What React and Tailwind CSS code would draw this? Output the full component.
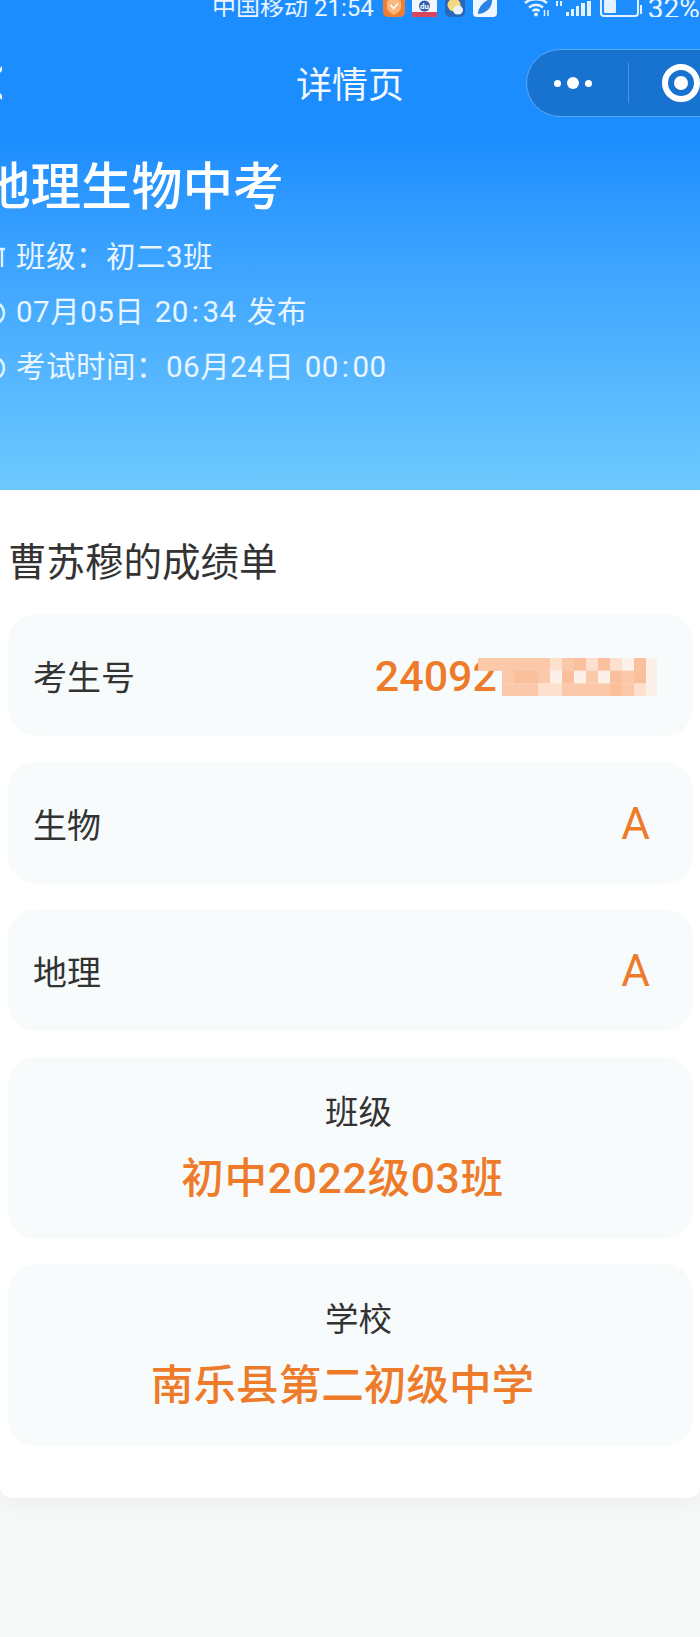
const FONT = 'font-["Roboto","Noto_Sans_CJK_SC",sans-serif]';

// mosaic over the blurred part of the candidate number
const MOSAIC = [
  'pppppplpdldlwdw',
  '..pddpwdwpwdpdw',
  '..pppllppppdplw',
];
const MOSAIC_COLORS = { p: '#fbc8a9', d: '#fabf9b', l: '#fde0ce', w: '#fdf0e8' };

function Mosaic() {
  return (
    <svg width="179" height="38" viewBox="0 0 179 38" className="block shrink-0">
      {MOSAIC.map((row, r) =>
        row.split('').map((c, i) =>
          c === '.' ? null : (
            <rect key={`${r}-${i}`} x={i * 12} y={r * 12.67} width="12.2" height="12.9" fill={MOSAIC_COLORS[c]} />
          ),
        ),
      )}
    </svg>
  );
}

function StatusIcons() {
  return (
    <div className="flex items-end h-[17px]">
      <svg width="22" height="17" viewBox="0 0 22 17" className="ml-[9px] block">
        <rect x="0" y="-6" width="22" height="23" rx="5" fill="#ee7f32" />
        <path d="M11 -2 L18 1 V7 C18 11 14 13 11 15 C8 13 4 11 4 7 V1 Z" fill="#f9b77f" />
        <path d="M7.5 5 L10.5 8.5 L15 3.5" fill="none" stroke="#fff" strokeWidth="1.8" />
      </svg>
      <svg width="25" height="17" viewBox="0 0 25 17" className="ml-[7px] block">
        <rect x="0" y="-6" width="25" height="23" rx="3" fill="#f4f6fb" />
        <rect x="0" y="12" width="25" height="5" fill="#d9455f" />
        <circle cx="12.5" cy="6" r="5.5" fill="#2f5fb3" />
        <text x="12.5" y="9" fontSize="8" fontWeight="700" textAnchor="middle" fill="#fff">du</text>
      </svg>
      <svg width="20" height="17" viewBox="0 0 20 17" className="ml-[8px] block">
        <rect x="0" y="-6" width="20" height="23" rx="5" fill="#2b67b8" />
        <circle cx="9" cy="5" r="6.5" fill="#f5d77c" />
        <ellipse cx="13" cy="10" rx="5" ry="4.5" fill="#eef3f8" />
      </svg>
      <svg width="24" height="17" viewBox="0 0 24 17" className="ml-[8px] block">
        <rect x="0" y="-6" width="24" height="23" rx="4" fill="#eef6fe" />
        <path d="M5 14 C5 7 11 1 19 -2 C20 6 15 13 5 14 Z" fill="#2a84e6" />
      </svg>
      <svg width="27" height="17" viewBox="0 0 27 17" className="ml-[27px] block" fill="none" stroke="#e4f1ff" strokeWidth="2.6">
        <path d="M1 3 C7 -2 17 -2 23 3" />
        <path d="M5 7.5 C9 4 15 4 19 7.5" />
        <path d="M8.5 11 C10.5 9.5 13.5 9.5 15.5 11" />
        <circle cx="12" cy="14.5" r="2" fill="#e4f1ff" stroke="none" />
        <path d="M20.5 10 V16 M24 10 V16" strokeWidth="1.5" />
      </svg>
      <div className="ml-[5px] mb-[11px] flex gap-[2px]">
        <span className="w-[2px] h-[5px] bg-[#e4f1ff]" />
        <span className="w-[2px] h-[5px] bg-[#e4f1ff]" />
      </div>
      <div className="ml-[4px] mb-[1px] flex items-end gap-[2px] h-[15px]">
        <span className="w-[3px] h-[4px] bg-[#e4f1ff]" />
        <span className="w-[3px] h-[7px] bg-[#e4f1ff]" />
        <span className="w-[3px] h-[10px] bg-[#e4f1ff]" />
        <span className="w-[4px] h-[13px] bg-[#e4f1ff]" />
        <span className="w-[4px] h-[15px] bg-[#e4f1ff]" />
      </div>
      <div className="ml-[9px] flex items-center h-[16px]">
        <div className="w-[39px] h-[21px] -mt-[5px] border-2 border-[#e4f1ff] rounded-[4px] p-[2px]">
          <div className="w-[12px] h-full bg-[#e4f1ff] rounded-[1px]" />
        </div>
        <span className="w-[2px] h-[9px] ml-[1px] bg-[#e4f1ff]" />
      </div>
    </div>
  );
}

function ClockStub() {
  return (
    <svg width="26" height="26" viewBox="0 0 26 26" className="shrink-0 block" fill="none" stroke="#e3f3ff" strokeWidth="2.4">
      <circle cx="13" cy="13" r="11" />
      <circle cx="13" cy="13" r="3.5" fill="#e3f3ff" stroke="none" />
    </svg>
  );
}

function ClassStub() {
  return (
    <svg width="26" height="26" viewBox="0 0 26 26" className="shrink-0 block" fill="none" stroke="#e3f3ff" strokeWidth="2.4">
      <path d="M2 4 H25 M22 4 V22" />
      <path d="M10 12 H17 V17 H10 Z" />
    </svg>
  );
}

function InfoLine({ icon, children }) {
  return (
    <div className="flex items-center h-[55px] -ml-[20px] text-[29.5px] text-[#e9f5ff] tracking-[0.5px] [word-spacing:2.5px]">
      {icon}
      <span className="ml-[10px] whitespace-pre">{children}</span>
    </div>
  );
}

function Colon() {
  return <span className="mx-[3px]">:</span>;
}

function Row({ label, children }) {
  return (
    <div className="flex items-center justify-between h-[122px] pl-[25px] pr-[43px] rounded-[28px] bg-[#f8fbfc]">
      <span className="pt-[7px] text-[34px] text-[#333]">{label}</span>
      {children}
    </div>
  );
}

function StackCard({ label, value, spacing }) {
  return (
    <div className="flex flex-col items-center h-[182px] pt-[32px] rounded-[28px] bg-[#f8fbfc]">
      <div className="ml-[16px] text-[33.5px] leading-[48px] text-[#333]">{label}</div>
      <div className={`-ml-[16px] mt-[17px] text-[42.6px] leading-[48px] font-medium text-[#ee7b2a] ${spacing}`}>{value}</div>
    </div>
  );
}

export default function App() {
  return (
    <div className={`w-[700px] h-[1637px] overflow-hidden bg-[#f7f9f8] ${FONT}`}>
      <div className="bg-[#1b8dff] h-[136px]">
        <div className="flex items-end h-[17px] overflow-hidden pl-[212px] text-white">
          <span className="text-[24px] leading-[17px] whitespace-nowrap text-[#eaf4ff]">中国移动 21:54</span>
          <StatusIcons />
          <span className="ml-[6px] text-[28px] leading-[17px] text-[#eaf4ff] whitespace-nowrap">32%</span>
        </div>
        <div className="flex items-center h-[68px] mt-[32px]">
          <svg width="2" height="36" viewBox="0 0 2 36" className="block shrink-0" fill="none" stroke="#fff" strokeWidth="3">
            <path d="M3 2 L-10 18 L3 34" />
          </svg>
          <span className="ml-[294px] pt-[6px] text-[36px] text-[#f3f9ff] whitespace-nowrap">详情页</span>
          <div className="ml-[122px] w-[200px] h-[68px] shrink-0 flex items-center rounded-l-[34px] border border-[#5aa9f6] bg-[#1873d0]">
            <div className="flex items-center gap-[6px] ml-[27px]">
              <span className="w-[7px] h-[7px] rounded-full bg-white" />
              <span className="w-[12px] h-[12px] rounded-full bg-white" />
              <span className="w-[7px] h-[7px] rounded-full bg-white" />
            </div>
            <span className="ml-[36px] w-px h-[40px] bg-[#4b94df]" />
            <div className="ml-[33px] w-[38px] h-[38px] rounded-full border-[6px] border-white flex items-center justify-center shrink-0">
              <span className="w-[14px] h-[14px] rounded-full bg-white" />
            </div>
          </div>
        </div>
      </div>

      <div className="h-[354px] bg-gradient-to-b from-[#1b8dff] to-[#6dc9fd]">
        <h1 className="-ml-[20px] pt-[22px] text-[50.6px] leading-[60px] font-medium text-white whitespace-nowrap">地理生物中考</h1>
        <div className="mt-[12px]">
          <InfoLine icon={<ClassStub />}>班级：初二3班</InfoLine>
          <InfoLine icon={<ClockStub />}>07月05日 20<Colon />34 发布</InfoLine>
          <InfoLine icon={<ClockStub />}>考试时间：06月24日 00<Colon />00</InfoLine>
        </div>
      </div>

      <div className="bg-white rounded-b-[12px] pt-[46px] pb-[52px] px-[8px] shadow-[0_8px_20px_rgba(0,0,0,0.04)]">
        <h2 className="mb-[24px] text-[38.5px] leading-[54px] text-[#333]">曹苏穆的成绩单</h2>
        <div className="flex flex-col gap-[25.5px] w-[685px]">
          <Row label="考生号">
            <div className="flex items-center -mr-[7px] pt-[3px]">
              <span className="text-[43px] font-medium text-[#ee7b2a]">24092</span>
              <div className="-ml-[19px]"><Mosaic /></div>
            </div>
          </Row>
          <Row label="生物">
            <span className="pt-[2px] text-[44px] text-[#ee7b2a]">A</span>
          </Row>
          <Row label="地理">
            <span className="pt-[2px] text-[44px] text-[#ee7b2a]">A</span>
          </Row>
          <StackCard label="班级" value="初中2022级03班" spacing="tracking-[0.7px]" />
          <StackCard label="学校" value="南乐县第二初级中学" spacing="tracking-normal" />
        </div>
      </div>
    </div>
  );
}
